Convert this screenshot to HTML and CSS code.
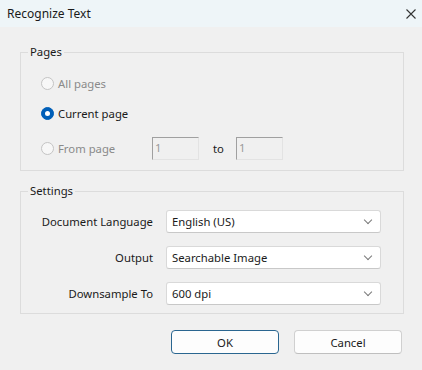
FILE: index.html
```html
<!DOCTYPE html>
<html lang="en">
<head>
  <meta charset="UTF-8">
  <title>Recognize Text</title>
  <link rel="stylesheet" href="styles.css">
</head>
<body>

  <div class="titlebar">
    <span class="title">Recognize Text</span>
    <svg class="close" width="10" height="10" viewBox="0 0 10 10">
      <path d="M0.5 0.5 L9.5 9.5 M9.5 0.5 L0.5 9.5" stroke="#333" stroke-width="1.1" fill="none"/>
    </svg>
  </div>

  <div class="dialog">

    <fieldset class="group pages">
      <legend>Pages</legend>
      <div class="pages-body">
        <label class="radio-row disabled">
          <span class="radio"></span>All pages
        </label>
        <label class="radio-row">
          <span class="radio checked"></span>Current page
        </label>
        <div class="radio-row range disabled">
          <span class="range-label"><span class="radio"></span>From page</span>
          <span class="num-box">1</span>
          <span class="to">to</span>
          <span class="num-box">1</span>
        </div>
      </div>
    </fieldset>

    <fieldset class="group settings">
      <legend>Settings</legend>
      <div class="settings-grid">
        <span class="field-label">Document Language</span>
        <div class="select">English (US)<span class="chevron"></span></div>

        <span class="field-label">Output</span>
        <div class="select">Searchable Image<span class="chevron"></span></div>

        <span class="field-label">Downsample To</span>
        <div class="select">600 dpi<span class="chevron"></span></div>
      </div>
    </fieldset>

    <div class="buttons">
      <button class="btn default">OK</button>
      <button class="btn">Cancel</button>
    </div>

  </div>

</body>
</html>
```

FILE: styles.css
```css
body {
  margin: 0;
  width: 422px;
  height: 370px;
  background: #f0f0f0;
  font-family: "Noto Sans", "Open Sans", sans-serif;
  font-size: 11.3px;
  color: #1a1a1a;
  overflow: hidden;
}

.titlebar {
  height: 27px;
  background: #eef5f8;
  display: flex;
  align-items: center;
  justify-content: space-between;
  padding: 0 6px 0 7px;
}

.title {
  font-size: 12px;
}

.close {
  display: block;
}

.dialog {
  padding-top: 17px;
}

/* group boxes */
.group {
  box-sizing: border-box;
  width: 384px;
  margin: 0 0 0 20px;
  border: 1px solid #dcdcdc;
  padding: 0 0 0 7px;
  min-width: 0;
}

.group legend {
  padding: 0 2px;
  line-height: 16px;
}

.settings {
  margin-top: 12px;
}

.pages-body {
  padding: 12px 0 10px 13px;
}

.radio-row {
  display: flex;
  align-items: center;
  height: 22px;
}

.radio-row + .radio-row {
  margin-top: 8px;
}

.radio-row.range {
  height: 23px;
  margin-top: 13px;
}

.disabled {
  color: #8a8a8a;
}

.radio {
  box-sizing: border-box;
  width: 13px;
  height: 13px;
  border-radius: 50%;
  border: 1px solid #c4c4c4;
  background: #f7f7f7;
  margin-right: 4px;
  flex: none;
}

.radio.checked {
  background: #005fb8;
  border-color: #005fb8;
  position: relative;
}

.radio.checked::after {
  content: "";
  position: absolute;
  left: 3px;
  top: 3px;
  width: 5px;
  height: 5px;
  border-radius: 50%;
  background: #fff;
}

.range-label {
  display: flex;
  align-items: center;
  width: 111px;
}

.num-box {
  box-sizing: border-box;
  width: 47px;
  height: 23px;
  border: 1px solid;
  border-color: #a0a0a0 #e3e3e3 #e3e3e3 #a0a0a0;
  background: #f0f0f0;
  color: #9a9a9a;
  padding-left: 2px;
  line-height: 20px;
}

.to {
  color: #1a1a1a;
  width: 10px;
  margin: 0 13px 0 14px;
}

/* settings */
.settings-grid {
  display: grid;
  grid-template-columns: 125px 215px;
  column-gap: 13px;
  row-gap: 13px;
  padding: 11px 0 8px 0;
  align-items: center;
}

.field-label {
  text-align: right;
}

.select {
  box-sizing: border-box;
  height: 23px;
  background: #fff;
  border: 1px solid #d9d9d9;
  border-bottom-color: #c8c8c8;
  border-radius: 3px;
  padding-left: 5px;
  display: flex;
  align-items: center;
  justify-content: space-between;
}

.chevron {
  width: 5px;
  height: 5px;
  border-right: 1px solid #7a7a7a;
  border-bottom: 1px solid #7a7a7a;
  transform: rotate(45deg);
  margin: 0 9px 4px 0;
}

/* buttons */
.buttons {
  display: flex;
  justify-content: flex-end;
  gap: 15px;
  padding-right: 20px;
  margin-top: 16px;
}

.btn {
  width: 108px;
  height: 24px;
  font-family: inherit;
  font-size: 11.3px;
  color: #1a1a1a;
  background: #fdfdfd;
  border: 1px solid #d0d0d0;
  border-bottom-color: #bfbfbf;
  border-radius: 4px;
  padding: 0;
}

.btn.default {
  border: 1px solid #2a6690;
}
```
